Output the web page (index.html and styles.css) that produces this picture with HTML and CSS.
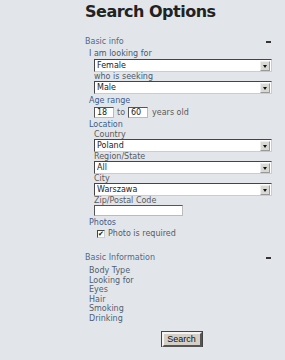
FILE: index.html
```
<!DOCTYPE html>
<html lang="en">
<head>
    <meta charset="UTF-8">
    <meta name="viewport" content="width=device-width, initial-scale=1.0">
    <title>Search Options</title>
    <link rel="stylesheet" href="styles.css">
</head>
<body>
    <div class="page">
        <h1>Search Options</h1>

        <div class="section-head">
            <span>Basic info</span>
            <span class="toggle"></span>
        </div>
        <div class="section">
            <div class="group-label dark">I am looking for</div>
            <div class="indent">
                <div class="select"><span>Female</span><span class="arrow"></span></div>
                <div class="field-label dark">who is seeking</div>
                <div class="select"><span>Male</span><span class="arrow"></span></div>
            </div>

            <div class="group-label">Age range</div>
            <div class="indent age-row">
                <span class="textbox small">18</span>
                <span>to</span>
                <span class="textbox small">60</span>
                <span class="years">years old</span>
            </div>

            <div class="group-label">Location</div>
            <div class="indent">
                <div class="field-label">Country</div>
                <div class="select"><span>Poland</span><span class="arrow"></span></div>
                <div class="field-label">Region/State</div>
                <div class="select"><span>All</span><span class="arrow"></span></div>
                <div class="field-label">City</div>
                <div class="select"><span>Warszawa</span><span class="arrow"></span></div>
                <div class="field-label">Zip/Postal Code</div>
                <span class="textbox zip"></span>
            </div>

            <div class="group-label photos">Photos</div>
            <div class="check-row">
                <span class="checkbox">&#10004;</span>
                <span>Photo is required</span>
            </div>
        </div>

        <div class="section-head second">
            <span>Basic Information</span>
            <span class="toggle"></span>
        </div>
        <ul class="info-list">
            <li>Body Type</li>
            <li>Looking for</li>
            <li>Eyes</li>
            <li>Hair</li>
            <li>Smoking</li>
            <li>Drinking</li>
        </ul>

        <div class="actions">
            <button class="search-btn">Search</button>
        </div>
    </div>
</body>
</html>
```

FILE: styles.css
```
body {
    margin: 0;
    padding: 0;
    background-color: #e2e6ea;
    font-family: "DejaVu Sans", Verdana, sans-serif;
    font-size: 8px;
    color: #5a5a5a;
}
.page {
    width: 187px;
    padding: 0 0 0 85px;
}
h1 {
    margin: 0;
    font-size: 16px;
    line-height: 24px;
    letter-spacing: -0.5px;
    color: #222;
}
.section-head {
    display: flex;
    justify-content: space-between;
    align-items: center;
    margin-top: 13px;
    line-height: 10px;
    color: #4f6a8a;
}
.section-head.second {
    margin-top: 14px;
}
.toggle {
    width: 5px;
    height: 2px;
    margin-right: 1px;
    background: #333;
}
.section {
    padding-left: 4px;
}
.group-label {
    margin-top: 2px;
    line-height: 10px;
    color: #3d5d8a;
}
.group-label.dark {
    color: #4a5a6a;
}
.indent {
    padding-left: 5px;
}
.field-label {
    line-height: 9px;
    color: #5a5a5a;
}
.field-label.dark {
    color: #4a5a6a;
}
.select {
    display: flex;
    justify-content: space-between;
    align-items: center;
    height: 13px;
    box-sizing: border-box;
    padding-left: 2px;
    background: #fff;
    border: 1px solid #ccc;
    border-top-color: #444;
    border-left-color: #444;
    color: #222;
    line-height: 11px;
}
.arrow {
    position: relative;
    width: 10px;
    height: 10px;
    margin-right: 1px;
    background: #d8d8d4;
    border: 1px solid #999;
    border-top-color: #eee;
    border-left-color: #eee;
    box-sizing: border-box;
}
.arrow::after {
    content: "";
    position: absolute;
    left: 2px;
    top: 3px;
    border-left: 2px solid transparent;
    border-right: 2px solid transparent;
    border-top: 3px solid #111;
}
.age-row {
    display: flex;
    align-items: center;
    gap: 3px;
    margin-top: 1px;
}
.age-row .years {
    margin-left: 1px;
}
.textbox {
    display: inline-block;
    height: 11px;
    box-sizing: border-box;
    padding-left: 2px;
    background: #fff;
    border: 1px solid #bbb;
    border-top-color: #555;
    border-left-color: #555;
    color: #222;
    line-height: 9px;
}
.textbox.small {
    width: 20px;
}
.textbox.zip {
    display: block;
    width: 89px;
}
.check-row {
    display: flex;
    align-items: center;
    gap: 3px;
    margin-top: 1px;
    padding-left: 8px;
    line-height: 10px;
}
.checkbox {
    display: inline-block;
    width: 8px;
    height: 8px;
    box-sizing: border-box;
    background: #fff;
    border: 1px solid #ccc;
    border-top-color: #444;
    border-left-color: #444;
    font-size: 7px;
    line-height: 6px;
    text-align: center;
    color: #111;
}
.info-list {
    list-style: none;
    margin: 3px 0 0;
    padding: 0 0 0 4px;
    color: #4f5f74;
}
.info-list li {
    line-height: 9.6px;
}
.actions {
    display: flex;
    justify-content: center;
    margin-top: 8px;
    padding-left: 6px;
}
.search-btn {
    width: 40px;
    height: 15px;
    padding: 0;
    font-family: "Liberation Sans", Arial, sans-serif;
    font-size: 9px;
    color: #111;
    background: #d4d0c8;
    border: 2px solid #555;
    border-top-color: #f4f4f4;
    border-left-color: #f4f4f4;
    outline: 1px solid #444;
    cursor: pointer;
}
```
